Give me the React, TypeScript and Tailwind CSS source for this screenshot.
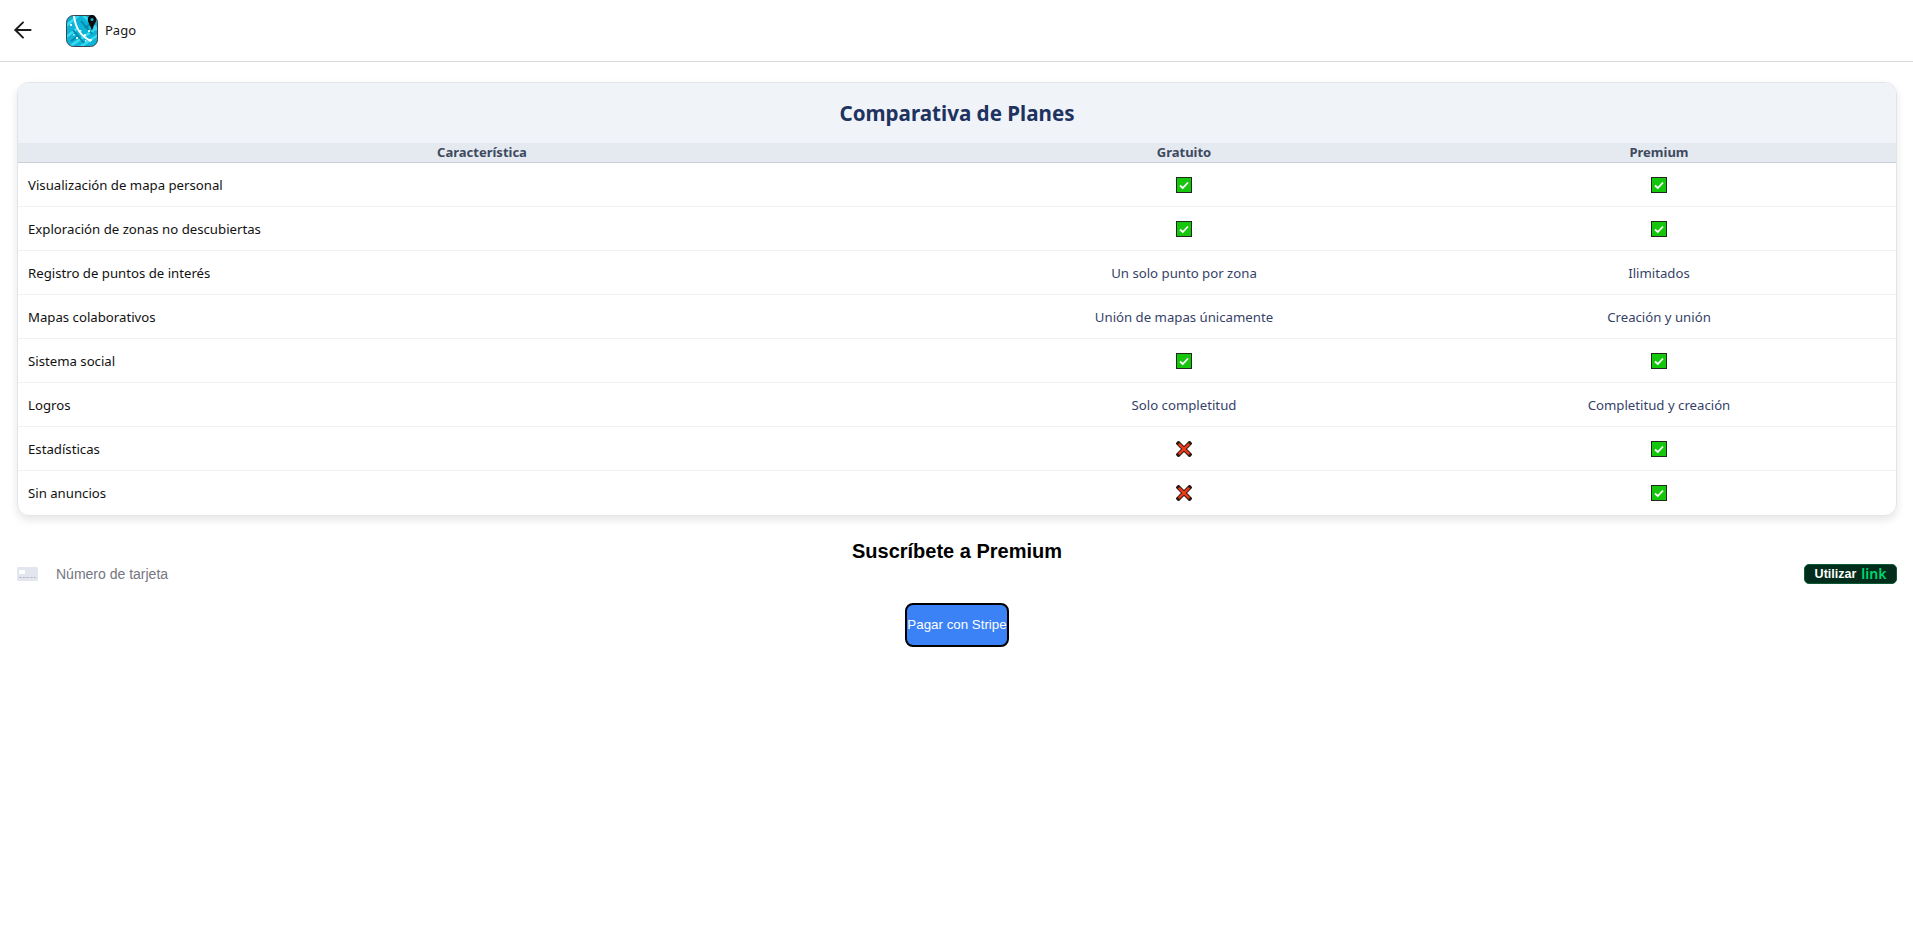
import { ArrowLeft } from 'lucide-react';

type Cell = boolean | string;

const rows: { name: string; free: Cell; premium: Cell }[] = [
  { name: 'Visualización de mapa personal', free: true, premium: true },
  { name: 'Exploración de zonas no descubiertas', free: true, premium: true },
  { name: 'Registro de puntos de interés', free: 'Un solo punto por zona', premium: 'Ilimitados' },
  { name: 'Mapas colaborativos', free: 'Unión de mapas únicamente', premium: 'Creación y unión' },
  { name: 'Sistema social', free: true, premium: true },
  { name: 'Logros', free: 'Solo completitud', premium: 'Completitud y creación' },
  { name: 'Estadísticas', free: false, premium: true },
  { name: 'Sin anuncios', free: false, premium: true },
];

function CheckIcon() {
  return (
    <svg width="16" height="16" viewBox="0 0 16 16" className="block">
      <rect x="0.5" y="0.5" width="15" height="15" fill="#16c60c" stroke="#1f2a1f" />
      <path d="M4 8.5 L6.8 11 L12 5.5" fill="none" stroke="#ffffff" strokeWidth="1.8" />
    </svg>
  );
}

function CrossIcon() {
  return (
    <svg width="16" height="16" viewBox="0 0 16 16" className="block">
      <path d="M2.5 2.5 L13.5 13.5 M13.5 2.5 L2.5 13.5" fill="none" stroke="#2b1a14" strokeWidth="4.4" strokeLinecap="square" />
      <path d="M2.8 2.8 L13.2 13.2 M13.2 2.8 L2.8 13.2" fill="none" stroke="#f03a17" strokeWidth="2.4" />
    </svg>
  );
}

function Logo() {
  return (
    <svg width="32" height="32" viewBox="0 0 32 32" className="block">
      <defs>
        <clipPath id="tile">
          <rect x="0.5" y="0.5" width="31" height="31" rx="7" />
        </clipPath>
      </defs>
      <g clipPath="url(#tile)">
        <rect width="32" height="32" fill="#0db4d8" />
        <path d="M0 11 L13 0 M3 32 L32 12 M14 32 L32 20 M0 22 L12 13 M17 0 L32 15" stroke="#35dcf2" strokeWidth="2.5" fill="none" />
        <path d="M15 6 L26 19 M7 15 L18 28 M19 13 L27 7 M5 26 L12 21" stroke="#0487ab" strokeWidth="1.8" fill="none" />
        <path d="M18 19 h2 v2 h-2z M22 15 h2 v2 h-2z M10 22 h2 v2 h-2z M24 24 h2 v2 h-2z M4 9 h2 v2 h-2z M14 15 h1.5 v1.5 h-1.5z M19 25 h1.5 v1.5 h-1.5z M7 19 h1.5 v1.5 h-1.5z" fill="#d5f7fc" />
        <path d="M8 1 C9 10 12 20 25 26" stroke="#ffffff" strokeWidth="2" fill="none" />
      </g>
      <rect x="0.5" y="0.5" width="31" height="31" rx="7" fill="none" stroke="#3a4350" strokeWidth="1" />
      <path d="M26 0 C23.4 0 21.8 2 21.8 4.4 C21.8 7.8 25 10.5 26 16 C27 10.5 30.2 7.8 30.2 4.4 C30.2 2 28.6 0 26 0 Z" fill="#0b0b0b" />
      <circle cx="26" cy="4.6" r="1.5" fill="#0db4d8" />
    </svg>
  );
}

function CardIcon() {
  return (
    <svg width="21" height="14" viewBox="0 0 21 14" className="block">
      <rect width="21" height="14" rx="1.5" fill="#e3e6ef" />
      <rect x="2" y="3" width="6" height="4" rx="1" fill="#ffffff" />
      <path d="M2 10.5 H19" stroke="#b5bac8" strokeWidth="1" strokeDasharray="2.5 1.2" />
    </svg>
  );
}

function Value({ value }: { value: Cell }) {
  if (value === true) return <div className="flex justify-center pt-[2px]"><CheckIcon /></div>;
  if (value === false) return <div className="flex justify-center pt-[2px]"><CrossIcon /></div>;
  return <div className="pt-[4px]">{value}</div>;
}

export default function App() {
  return (
    <div className="min-h-screen bg-white font-['Noto_Sans',sans-serif] text-black">
      {/* Header */}
      <header className="flex h-[62px] items-center border-b border-[#d8d8d8] pl-[10px]">
        <ArrowLeft size={26} strokeWidth={1.8} className="-mt-[1px] text-[#1c1c1c]" />
        <div className="ml-[30px]"><Logo /></div>
        <span className="ml-[7px] mt-[1px] text-[13px] text-[#1a1a1a]">Pago</span>
      </header>

      <main className="pl-[17px] pr-[16px] pt-[20px]">
        {/* Plans */}
        <section className="overflow-hidden rounded-[12px] border border-[#e2e4e8] pb-[1px] shadow-[0_4px_8px_rgba(0,0,0,0.1)]">
          <h2 className="flex h-[60px] items-center justify-center bg-[#f0f4f8] pt-[1px] text-[20.6px] font-bold text-[#1e3360]">
            Comparativa de Planes
          </h2>
          <table className="w-full table-fixed border-collapse text-[13.2px]">
            <colgroup>
              <col className="w-[928px]" />
              <col className="w-[476px]" />
              <col />
            </colgroup>
            <thead>
              <tr className="h-[19px] border-b border-[#cbd0d6] bg-[#e5e9f0] text-[13px] font-bold leading-none text-[#3e4a5f]">
                <th>Característica</th>
                <th>Gratuito</th>
                <th>Premium</th>
              </tr>
            </thead>
            <tbody>
              {rows.map((row, i) => (
                <tr key={row.name} className={i < rows.length - 1 ? 'h-[44px] border-b border-[#f0f1f3]' : 'h-[44px]'}>
                  <td className="pl-[10px] text-[#111111]"><div className="pt-[4px]">{row.name}</div></td>
                  <td className="text-center text-[#363f69]"><Value value={row.free} /></td>
                  <td className="text-center text-[#363f69]"><Value value={row.premium} /></td>
                </tr>
              ))}
            </tbody>
          </table>
        </section>

        {/* Payment form */}
        <section className="font-['Liberation_Sans',sans-serif]">
          <h3 className="mt-[24px] text-center text-[20px] font-bold leading-[23px] text-black">Suscríbete a Premium</h3>
          <div className="mt-[1px] flex h-[20px] items-center">
            <CardIcon />
            <span className="ml-[18px] text-[14px] text-[#757680]">Número de tarjeta</span>
            <div className="ml-auto flex h-[20px] w-[93px] items-center justify-center gap-[5px] rounded-[5px] border border-[#0a5a34] bg-[#022c1b]">
              <span className="text-[12.5px] font-bold text-white">Utilizar</span>
              <span className="font-['Noto_Sans',sans-serif] text-[14px] font-semibold leading-none text-[#00d66f]">link</span>
            </div>
          </div>
          <div className="mt-[19px] flex justify-center">
            <button className="h-[44px] w-[104px] whitespace-nowrap rounded-[8px] border-2 border-black bg-[#3b82f6] text-[13.33px] text-white">
              Pagar con Stripe
            </button>
          </div>
        </section>
      </main>
    </div>
  );
}
